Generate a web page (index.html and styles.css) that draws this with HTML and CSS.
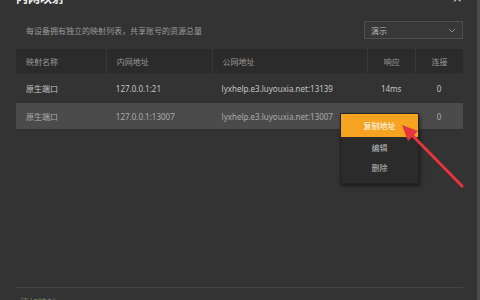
FILE: index.html
```html
<!DOCTYPE html>
<html lang="zh-CN">
<head>
  <meta charset="utf-8">
  <title>内网映射</title>
  <link rel="stylesheet" href="styles.css">
</head>
<body>
  <div class="window">
    <div class="titlebar">
      <span class="title">内网映射</span>
      <span class="close">×</span>
    </div>

    <div class="toolbar">
      <span class="hint">每设备拥有独立的映射列表，共享账号的资源总量</span>
      <div class="select">
        <span>演示</span>
        <svg width="8" height="5" viewBox="0 0 8 5"><path d="M1 1l3 3 3-3" fill="none" stroke="#888" stroke-width="1"/></svg>
      </div>
    </div>

    <div class="table">
      <div class="row head">
        <div class="cell c1">映射名称</div>
        <div class="cell c2">内网地址</div>
        <div class="cell c3">公网地址</div>
        <div class="cell c4">响应</div>
        <div class="cell c5">连接</div>
      </div>
      <div class="row">
        <div class="cell c1">原生端口</div>
        <div class="cell c2">127.0.0.1:21</div>
        <div class="cell c3">lyxhelp.e3.luyouxia.net:13139</div>
        <div class="cell c4">14ms</div>
        <div class="cell c5">0</div>
      </div>
      <div class="row selected">
        <div class="cell c1">原生端口</div>
        <div class="cell c2">127.0.0.1:13007</div>
        <div class="cell c3">lyxhelp.e3.luyouxia.net:13007</div>
        <div class="cell c4"></div>
        <div class="cell c5">0</div>
      </div>
    </div>

    <div class="footer">
      <span class="foot-text">添加映射</span>
    </div>
  </div>

  <ul class="menu">
    <li class="active">复制地址</li>
    <li>编辑</li>
    <li>删除</li>
  </ul>

  <svg class="arrow" width="480" height="300" viewBox="0 0 480 300">
    <line x1="462" y1="186" x2="410" y2="133" stroke="#e8343e" stroke-width="3" stroke-linecap="round"/>
    <path d="M402 125 L418 131 L408 141 Z" fill="#e8343e"/>
  </svg>
</body>
</html>
```

FILE: styles.css
```css
html,
body {
  margin: 0;
  background-color: #333333;
}

body {
  height: 300px;
  overflow: hidden;
  font-family: "Noto Sans", "Noto Sans CJK SC", sans-serif;
  color: #bbbbbb;
  position: relative;
}

.window {
  height: 300px;
  box-sizing: border-box;
  display: flex;
  flex-direction: column;
  padding: 0 14px 0 16px;
  border-right: 3px solid #4a4a4a;
}

.titlebar {
  margin-top: -11px;
  height: 18px;
  display: flex;
  justify-content: space-between;
  align-items: center;
}

.title {
  color: #f0f0f0;
  font-size: 12px;
  font-weight: bold;
}

.close {
  color: #cccccc;
  font-size: 16px;
  margin-right: 1px;
}

.toolbar {
  margin-top: 13px;
  display: flex;
  justify-content: space-between;
  align-items: center;
  height: 20px;
}

.hint {
  padding-left: 10px;
  font-size: 8px;
  color: #9a9a9a;
}

.select {
  width: 99px;
  height: 18px;
  box-sizing: border-box;
  border: 1px solid #4e4e4e;
  background-color: #383838;
  display: flex;
  justify-content: space-between;
  align-items: center;
  padding: 0 6px;
  font-size: 8px;
  color: #bbbbbb;
}

.table {
  margin-top: 9px;
  font-size: 8px;
}

.row {
  display: flex;
  height: 28px;
  align-items: center;
  color: #c4c4c4;
}

.head {
  height: 24px;
  background-color: #2b2b2b;
  color: #9a9a9a;
  border-bottom: 1px solid #2e2e2e;
}

.selected {
  height: 26px;
  margin-top: 1px;
  background-color: #4b4b4b;
  color: #aaaaaa;
}

.cell {
  box-sizing: border-box;
  padding-left: 10px;
  white-space: nowrap;
  height: 100%;
  display: flex;
  align-items: center;
}

.head .cell + .cell {
  border-left: 1px solid #383838;
}

.c1 {
  width: 90px;
}

.c2 {
  width: 106px;
}

.c3 {
  width: 156px;
}

.c4,
.c5 {
  width: 48px;
  padding-left: 0;
  justify-content: center;
}

.footer {
  margin-top: auto;
  border-top: 1px solid #424242;
  height: 12px;
  padding-left: 4px;
}

.foot-text {
  display: block;
  margin-top: 8px;
  font-size: 9px;
  color: #7d8a62;
}

.menu {
  position: absolute;
  left: 340px;
  top: 113px;
  width: 77px;
  margin: 0;
  padding: 0 0 6px;
  list-style: none;
  background-color: #2b2b2b;
  border: 1px solid #242424;
  box-shadow: 1px 2px 4px rgba(0, 0, 0, 0.5);
  font-size: 8px;
  color: #bbbbbb;
}

.menu li {
  height: 20px;
  display: flex;
  justify-content: center;
  align-items: center;
}

.menu .active {
  height: 23px;
  background-color: #f6a322;
  color: #ffffff;
}

.arrow {
  position: absolute;
  left: 0;
  top: 0;
}
```
